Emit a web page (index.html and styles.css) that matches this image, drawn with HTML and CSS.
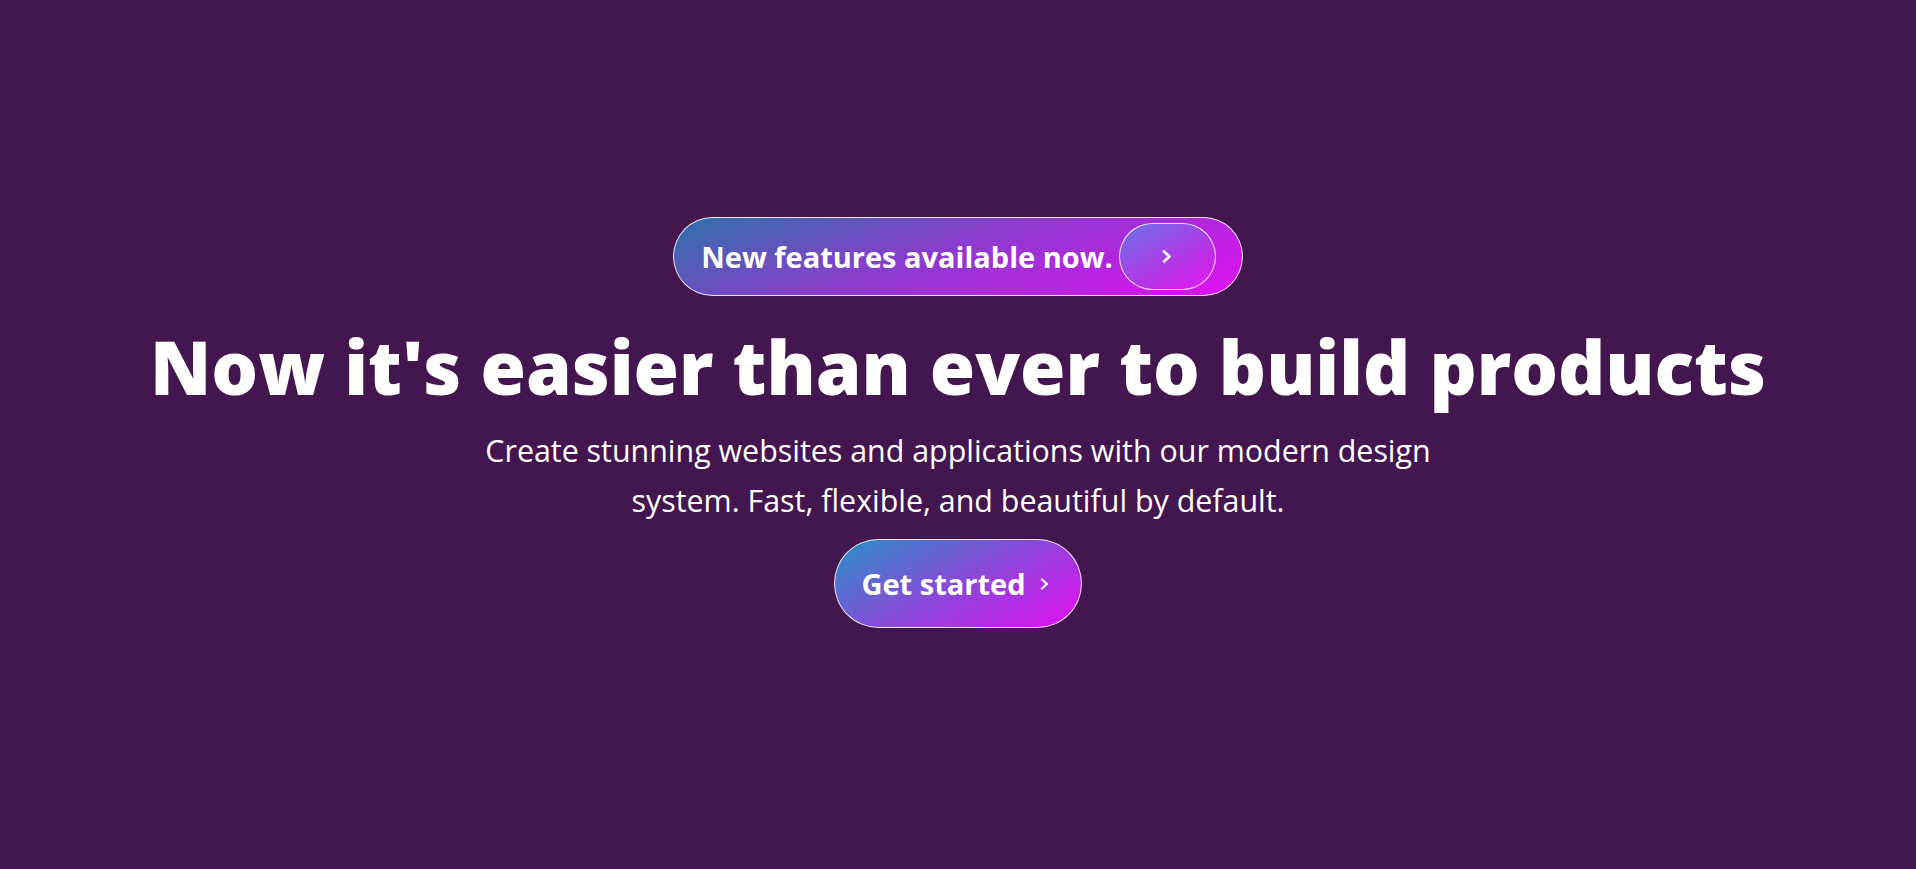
FILE: index.html
```html
<!DOCTYPE html>
<html lang="en">
<head>
<meta charset="utf-8">
<title>Hero</title>
<link rel="stylesheet" href="styles.css">
</head>
<body>
<main class="hero">
  <a class="badge" href="#">
    <span class="badge-text">New features available now.</span>
    <span class="badge-arrow">
      <svg width="10" height="13" viewBox="0 0 10 13" aria-hidden="true"><polyline points="2,1.5 7.5,6.5 2,11.5" fill="none" stroke="#fff" stroke-width="2.6" stroke-linecap="round" stroke-linejoin="round"/></svg>
    </span>
  </a>
  <h1 class="title">Now it's easier than ever to build products</h1>
  <p class="lead">Create stunning websites and applications with our modern design system. Fast, flexible, and beautiful by default.</p>
  <a class="cta" href="#">
    <span>Get started</span>
    <svg width="10" height="12" viewBox="0 0 10 12" aria-hidden="true"><polyline points="2,1.5 7,6 2,10.5" fill="none" stroke="#fff" stroke-width="2.2" stroke-linecap="round" stroke-linejoin="round"/></svg>
  </a>
</main>
</body>
</html>
```
FILE: styles.css
```css
* { box-sizing: border-box; }
html, body { margin: 0; padding: 0; }
body {
  background: #43164f;
  color: #fff;
  font-family: "Open Sans", "Noto Sans", "Liberation Sans", sans-serif;
}
.hero {
  min-height: 100vh;
  display: flex;
  flex-direction: column;
  align-items: center;
  justify-content: center;
  padding-bottom: 24px;
  text-align: center;
}
.badge {
  display: inline-flex;
  align-items: center;
  gap: 6px;
  height: 79px;
  padding: 0 26px 0 27px;
  border-radius: 999px;
  border: 1px solid rgba(255,255,255,0.85);
  background: linear-gradient(160deg, #2f72aa 0%, #8a3ccc 45%, #e20ff3 100%);
  color: #fff;
  text-decoration: none;
}
.badge-text {
  font-size: 29px;
  font-weight: 700;
  line-height: 1;
}
.badge-arrow {
  display: flex;
  align-items: center;
  justify-content: center;
  width: 97px;
  height: 67px;
  border-radius: 999px;
  border: 1px solid rgba(255,255,255,0.85);
  background: linear-gradient(150deg, #6a74e4 0%, #b03ae6 55%, #e816f2 100%);
}
.title {
  margin: 29px 0 0;
  font-size: 73.5px;
  font-weight: 800;
  line-height: 1.13;
  white-space: nowrap;
}
.lead {
  margin: 18px 0 0;
  max-width: 1000px;
  font-size: 30.4px;
  font-weight: 400;
  line-height: 50px;
}
.cta {
  display: inline-flex;
  align-items: center;
  gap: 14px;
  height: 89px;
  margin-top: 13px;
  padding: 0 31px 0 26px;
  border-radius: 999px;
  border: 1px solid rgba(255,255,255,0.85);
  background: linear-gradient(150deg, #2a90c9 0%, #8a48d8 50%, #e20ff3 100%);
  color: #fff;
  text-decoration: none;
  font-size: 29px;
  font-weight: 700;
}
```
